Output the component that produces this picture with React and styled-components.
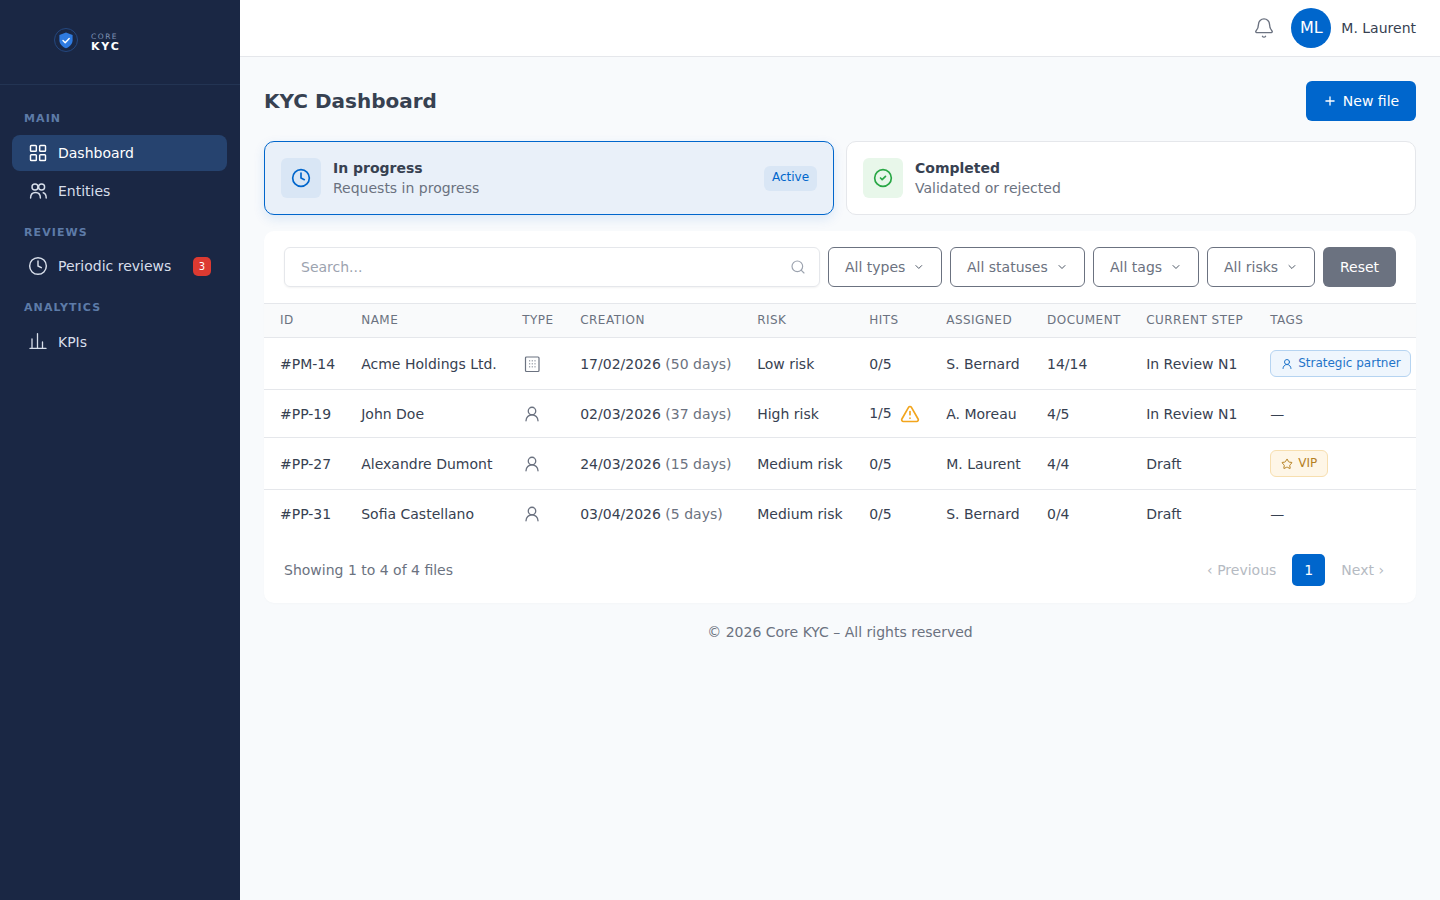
import React from "react";
import styled, { createGlobalStyle } from "styled-components";
import {
  Bell,
  ChevronDown,
  CircleCheck,
  Clock,
  LayoutGrid,
  Plus,
  Search,
  Star,
  TriangleAlert,
  UserRound,
} from "lucide-react";

const GlobalStyle = createGlobalStyle`
  * { box-sizing: border-box; }
  html, body { margin: 0; height: 100%; }
  body {
    font-family: "DejaVu Sans", sans-serif;
    background: #f8fafc;
    color: #374151;
    font-size: 14px;
  }
`;

const Shell = styled.div`
  display: flex;
  min-height: 100vh;
`;

const Sidebar = styled.aside`
  width: 240px;
  flex-shrink: 0;
  background: #1a2744;
  color: #d7deea;
`;

const Brand = styled.div`
  height: 85px;
  border-bottom: 1px solid #233453;
  display: flex;
  align-items: center;
  gap: 13px;
  padding: 0 0 4px 54px;
`;

const BrandMark = styled.div`
  width: 24px;
  height: 24px;
  border-radius: 50%;
  border: 1px solid #24477f;
  display: flex;
  align-items: center;
  justify-content: center;
`;

const BrandText = styled.div`
  display: flex;
  flex-direction: column;
  padding-top: 4px;
`;

const BrandTop = styled.span`
  font-size: 7.5px;
  letter-spacing: 1.5px;
  color: #7f93b5;
  line-height: 8px;
`;

const BrandBottom = styled.span`
  font-size: 11px;
  font-weight: 700;
  letter-spacing: 1.8px;
  color: #fff;
  line-height: 11px;
`;

const Nav = styled.nav`
  padding: 16px 13px 0 12px;
`;

const NavTitle = styled.div`
  font-size: 11px;
  font-weight: 700;
  letter-spacing: 1.1px;
  color: #5d7ba8;
  padding-left: 12px;
  line-height: 14px;
  margin: ${p => p.$top}px 0 ${p => p.$bottom}px;
`;

const NavItem = styled.a`
  display: flex;
  align-items: center;
  height: 36px;
  gap: 10px;
  padding: 0 16px;
  margin-bottom: 2px;
  border-radius: 8px;
  color: ${p => (p.$active ? "#fff" : "#d7deea")};
  background: ${p => (p.$active ? "#26436f" : "transparent")};
  font-size: 14px;
`;

const NavLabel = styled.span`
  flex: 1;
`;

const NavBadge = styled.span`
  width: 18px;
  height: 19px;
  border-radius: 5px;
  background: #dc3a31;
  color: #fff;
  font-size: 10px;
  display: flex;
  align-items: center;
  justify-content: center;
`;

const Content = styled.div`
  flex: 1;
  min-width: 0;
  display: flex;
  flex-direction: column;
`;

const Topbar = styled.header`
  height: 57px;
  background: #fff;
  border-bottom: 1px solid #e5e7eb;
  display: flex;
  align-items: center;
  justify-content: flex-end;
  padding: 0 24px;
`;

const BellButton = styled.span`
  display: flex;
  color: #6b7280;
  margin-right: 16px;
`;

const Avatar = styled.div`
  width: 40px;
  height: 40px;
  border-radius: 50%;
  background: #0066cc;
  color: #fff;
  font-size: 16px;
  display: flex;
  align-items: center;
  justify-content: center;
  margin-right: 10px;
  padding-bottom: 1px;
`;

const UserName = styled.span`
  font-size: 14px;
  color: #374151;
`;

const Main = styled.main`
  padding: 24px;
`;

const TitleRow = styled.div`
  display: flex;
  align-items: center;
  justify-content: space-between;
  margin-bottom: 20px;
`;

const Title = styled.h1`
  margin: 0;
  font-size: 20px;
  font-weight: 700;
  color: #374151;
`;

const NewButton = styled.button`
  height: 40px;
  width: 110px;
  border: 0;
  border-radius: 6px;
  background: #0066cc;
  color: #fff;
  font: inherit;
  display: flex;
  align-items: center;
  justify-content: center;
  gap: 6px;
`;

const Tabs = styled.div`
  display: grid;
  grid-template-columns: 1fr 1fr;
  gap: 12px;
  margin-bottom: 16px;
`;

const Tab = styled.div`
  height: 74px;
  border-radius: 10px;
  border: 1px solid ${p => (p.$active ? "#0066cc" : "#e5e7eb")};
  background: ${p => (p.$active ? "#e9f0f9" : "#fff")};
  box-shadow: ${p => (p.$active ? "0 4px 12px rgba(0, 102, 204, 0.12)" : "none")};
  display: flex;
  align-items: center;
  padding: 0 16px;
  gap: 12px;
`;

const TabIcon = styled.div`
  width: 40px;
  height: 40px;
  border-radius: 6px;
  background: ${p => p.$bg};
  color: ${p => p.$color};
  display: flex;
  align-items: center;
  justify-content: center;
`;

const TabText = styled.div`
  flex: 1;
`;

const TabTitle = styled.div`
  font-size: 14px;
  font-weight: 700;
  line-height: 20px;
  color: #374151;
`;

const TabSub = styled.div`
  font-size: 14px;
  line-height: 20px;
  color: #6b7280;
`;

const ActivePill = styled.span`
  height: 25px;
  width: 53px;
  padding-bottom: 2px;
  display: flex;
  align-items: center;
  justify-content: center;
  border-radius: 6px;
  background: #d9e6f5;
  color: #0066cc;
  font-size: 12px;
`;

const Card = styled.section`
  background: #fff;
  border-radius: 10px;
  box-shadow: 0 1px 2px rgba(0, 0, 0, 0.02);
`;

const Filters = styled.div`
  display: flex;
  gap: 8px;
  padding: 16px 20px;
`;

const SearchBox = styled.div`
  flex: 1;
  height: 40px;
  border: 1px solid #e5e7eb;
  border-radius: 6px;
  box-shadow: 0 1px 2px rgba(0, 0, 0, 0.05);
  display: flex;
  align-items: center;
  justify-content: space-between;
  padding: 0 13px 0 16px;
  color: #9ca3af;
`;

const Filter = styled.div`
  height: 40px;
  width: ${p => p.$w}px;
  flex-shrink: 0;
  border: 1px solid #6b7280;
  border-radius: 6px;
  color: #6b7280;
  display: flex;
  align-items: center;
  gap: 8px;
  padding: 0 16px;
  white-space: nowrap;

  svg {
    color: #4b5563;
  }
`;

const ResetButton = styled.button`
  height: 40px;
  width: 73px;
  flex-shrink: 0;
  border: 0;
  border-radius: 6px;
  background: #6b7280;
  color: #fff;
  font: inherit;
`;

const Table = styled.table`
  width: 100%;
  table-layout: fixed;
  border-collapse: collapse;
`;

const Col = styled.col`
  width: ${p => p.$w}px;
`;

const Th = styled.th`
  height: 34px;
  padding: 0 0 2px 16px;
  background: #f9fafb;
  border-top: 1px solid #e5e7eb;
  border-bottom: 1px solid #e5e7eb;
  text-align: left;
  font-size: 12px;
  font-weight: 400;
  letter-spacing: 0.48px;
  color: #6b7280;
  white-space: nowrap;
`;

const Td = styled.td`
  height: ${p => p.$h}px;
  padding: 0 0 ${p => p.$bottom || 0}px 16px;
  border-bottom: ${p => (p.$last ? "0" : "1px solid #e5e7eb")};
  white-space: nowrap;
  color: #374151;
`;

const Days = styled.span`
  color: #6b7280;
`;

const TypeIcon = styled.span`
  display: inline-flex;
  vertical-align: middle;
  color: #6b7280;
  margin-left: 1px;
`;

const Hits = styled.span`
  display: inline-flex;
  align-items: center;
  gap: 8px;
  color: #374151;
`;

const AlertIcon = styled.span`
  display: flex;
  color: #f2a51d;
  margin-top: 2px;
`;

const Tag = styled.span`
  display: inline-flex;
  align-items: center;
  height: 27px;
  gap: 5px;
  padding: 0 ${p => p.$right}px 2px 10px;
  border-radius: 6px;
  font-size: 12px;
  color: ${p => p.$color};
  background: ${p => p.$bg};
  border: 1px solid ${p => p.$border};

  svg {
    margin-top: 2px;
  }
`;

const CardFooter = styled.div`
  display: flex;
  align-items: center;
  justify-content: space-between;
  padding: 16px 32px 16px 20px;
  height: 65px;
  color: #6b7280;
`;

const Pager = styled.div`
  display: flex;
  align-items: center;
  gap: 16px;
`;

const PagerLink = styled.span`
  color: #b5bac2;
`;

const PagerPage = styled.span`
  width: 33px;
  height: 32px;
  border-radius: 5px;
  background: #0066cc;
  color: #fff;
  display: flex;
  align-items: center;
  justify-content: center;
`;

const PageFooter = styled.footer`
  text-align: center;
  padding-top: 21px;
  color: #6b7280;
  line-height: 17px;
`;

const ChartIcon = () => (
  <svg width="20" height="20" viewBox="0 0 20 20" fill="none" stroke="currentColor" strokeWidth="1.3" strokeLinecap="round">
    <path d="M2 16.4h16M4 16V7M9.5 16V1.6M14.5 16v-6" />
  </svg>
);

const PeopleIcon = () => (
  <svg width="20" height="20" viewBox="0 0 20 20" fill="none" stroke="currentColor" strokeWidth="1.45" strokeLinecap="round">
    <circle cx="7" cy="6" r="3" />
    <circle cx="13.6" cy="6" r="3" />
    <path d="M2.6 17c0-3.4 2-5.5 4.9-5.5s4.9 2.1 4.9 5.5M15.2 11.8c1.9.6 3 2.4 3 5.2" />
  </svg>
);

const BuildingIcon = () => (
  <svg width="18" height="18" viewBox="0 0 18 18" fill="none">
    <rect x="2.5" y="2" width="13.5" height="14.5" rx="1" stroke="currentColor" strokeWidth="1.2" />
    <g fill="#8d939d">
      <rect x="6" y="5.2" width="1.2" height="1.2" />
      <rect x="8.7" y="5.2" width="1.2" height="1.2" />
      <rect x="11.4" y="5.2" width="1.2" height="1.2" />
      <rect x="6" y="8.2" width="1.2" height="1.2" />
      <rect x="8.7" y="8.2" width="1.2" height="1.2" />
      <rect x="11.4" y="8.2" width="1.2" height="1.2" />
      <rect x="6" y="11.2" width="1.2" height="1.2" />
      <rect x="8.7" y="11.2" width="1.2" height="1.2" />
      <rect x="11.4" y="11.2" width="1.2" height="1.2" />
    </g>
  </svg>
);

const ShieldLogo = () => (
  <svg width="16" height="17" viewBox="0 0 16 17">
    <path d="M8 .6l6.6 2.3v5.4c0 3.7-2.8 6.5-6.6 8-3.8-1.5-6.6-4.3-6.6-8V2.9z" fill="#2f7be0" />
    <path d="M5 8.6l2.2 2.1 4-4.2" fill="none" stroke="#fff" strokeWidth="1.4" strokeLinecap="round" strokeLinejoin="round" />
  </svg>
);

const rows = [
  { id: "#PM-14", name: "Acme Holdings Ltd.", company: true, date: "17/02/2026", days: "(50 days)", risk: "Low risk", hits: "0/5", who: "S. Bernard", doc: "14/14", step: "In Review N1", tag: "partner", h: 52 },
  { id: "#PP-19", name: "John Doe", date: "02/03/2026", days: "(37 days)", risk: "High risk", hits: "1/5", alert: true, who: "A. Moreau", doc: "4/5", step: "In Review N1", h: 48 },
  { id: "#PP-27", name: "Alexandre Dumont", date: "24/03/2026", days: "(15 days)", risk: "Medium risk", hits: "0/5", who: "M. Laurent", doc: "4/4", step: "Draft", tag: "vip", h: 52 },
  { id: "#PP-31", name: "Sofia Castellano", date: "03/04/2026", days: "(5 days)", risk: "Medium risk", hits: "0/5", who: "S. Bernard", doc: "0/4", step: "Draft", h: 48 },
];

const columns = [
  ["ID", 81.2],
  ["Name", 161],
  ["Type", 58],
  ["Creation", 177],
  ["Risk", 112],
  ["Hits", 77],
  ["Assigned", 100.8],
  ["Document", 99.2],
  ["Current step", 124],
  ["Tags", 161.8],
];

function RowTag({ kind }) {
  if (kind === "partner") {
    return (
      <Tag $right={9} $color="#1f74c9" $bg="#eff6fd" $border="#b6d4f1">
        <UserRound size={12} />
        Strategic partner
      </Tag>
    );
  }
  if (kind === "vip") {
    return (
      <Tag $right={10} $color="#b5801f" $bg="#fef6e7" $border="#f7dfb0">
        <Star size={12} />
        VIP
      </Tag>
    );
  }
  return "—";
}

function App() {
  return (
    <Shell>
      <GlobalStyle />
      <Sidebar>
        <Brand>
          <BrandMark>
            <ShieldLogo />
          </BrandMark>
          <BrandText>
            <BrandTop>CORE</BrandTop>
            <BrandBottom>KYC</BrandBottom>
          </BrandText>
        </Brand>
        <Nav>
          <NavTitle $top={11} $bottom={9}>MAIN</NavTitle>
          <NavItem $active>
            <LayoutGrid size={20} strokeWidth={1.75} />
            <NavLabel>Dashboard</NavLabel>
          </NavItem>
          <NavItem>
            <PeopleIcon />
            <NavLabel>Entities</NavLabel>
          </NavItem>
          <NavTitle $top={17} $bottom={8}>REVIEWS</NavTitle>
          <NavItem>
            <Clock size={20} strokeWidth={1.75} />
            <NavLabel>Periodic reviews</NavLabel>
            <NavBadge>3</NavBadge>
          </NavItem>
          <NavTitle $top={17} $bottom={9}>ANALYTICS</NavTitle>
          <NavItem>
            <ChartIcon />
            <NavLabel>KPIs</NavLabel>
          </NavItem>
        </Nav>
      </Sidebar>
      <Content>
        <Topbar>
          <BellButton>
            <Bell size={22} strokeWidth={1.5} />
          </BellButton>
          <Avatar>ML</Avatar>
          <UserName>M. Laurent</UserName>
        </Topbar>
        <Main>
          <TitleRow>
            <Title>KYC Dashboard</Title>
            <NewButton>
              <Plus size={14} strokeWidth={2.25} />
              New file
            </NewButton>
          </TitleRow>
          <Tabs>
            <Tab $active>
              <TabIcon $bg="#d9e6f5" $color="#0066cc">
                <Clock size={20} strokeWidth={2} />
              </TabIcon>
              <TabText>
                <TabTitle>In progress</TabTitle>
                <TabSub>Requests in progress</TabSub>
              </TabText>
              <ActivePill>Active</ActivePill>
            </Tab>
            <Tab>
              <TabIcon $bg="#e8f7ea" $color="#28a745">
                <CircleCheck size={20} strokeWidth={2} />
              </TabIcon>
              <TabText>
                <TabTitle>Completed</TabTitle>
                <TabSub>Validated or rejected</TabSub>
              </TabText>
            </Tab>
          </Tabs>
          <Card>
            <Filters>
              <SearchBox>
                Search...
                <Search size={16} strokeWidth={1.75} />
              </SearchBox>
              <Filter $w={114}>All types <ChevronDown size={12} /></Filter>
              <Filter $w={135}>All statuses <ChevronDown size={12} /></Filter>
              <Filter $w={106}>All tags <ChevronDown size={12} /></Filter>
              <Filter $w={108}>All risks <ChevronDown size={12} /></Filter>
              <ResetButton>Reset</ResetButton>
            </Filters>
            <Table>
              <colgroup>
                {columns.map(([label, w]) => (
                  <Col key={label} $w={w} />
                ))}
              </colgroup>
              <thead>
                <tr>
                  {columns.map(([label]) => (
                    <Th key={label}>{label.toUpperCase()}</Th>
                  ))}
                </tr>
              </thead>
              <tbody>
                {rows.map((row, i) => {
                  const last = i === rows.length - 1;
                  return (
                    <tr key={row.id}>
                      <Td $h={row.h} $last={last}>{row.id}</Td>
                      <Td $h={row.h} $last={last}>{row.name}</Td>
                      <Td $h={row.h} $last={last}>
                        <TypeIcon>{row.company ? <BuildingIcon /> : <UserRound size={18} strokeWidth={1.75} />}</TypeIcon>
                      </Td>
                      <Td $h={row.h} $last={last}>
                        {row.date} <Days>{row.days}</Days>
                      </Td>
                      <Td $h={row.h} $last={last}>{row.risk}</Td>
                      <Td $h={row.h} $last={last} $bottom={row.alert ? 2 : 0}>
                        <Hits>
                          {row.hits}
                          {row.alert && (
                            <AlertIcon>
                              <TriangleAlert size={20} strokeWidth={2} />
                            </AlertIcon>
                          )}
                        </Hits>
                      </Td>
                      <Td $h={row.h} $last={last}>{row.who}</Td>
                      <Td $h={row.h} $last={last}>{row.doc}</Td>
                      <Td $h={row.h} $last={last}>{row.step}</Td>
                      <Td $h={row.h} $last={last}>
                        <RowTag kind={row.tag} />
                      </Td>
                    </tr>
                  );
                })}
              </tbody>
            </Table>
            <CardFooter>
              <span>Showing 1 to 4 of 4 files</span>
              <Pager>
                <PagerLink>‹ Previous</PagerLink>
                <PagerPage>1</PagerPage>
                <PagerLink>Next ›</PagerLink>
              </Pager>
            </CardFooter>
          </Card>
          <PageFooter>© 2026 Core KYC – All rights reserved</PageFooter>
        </Main>
      </Content>
    </Shell>
  );
}

export default App;
